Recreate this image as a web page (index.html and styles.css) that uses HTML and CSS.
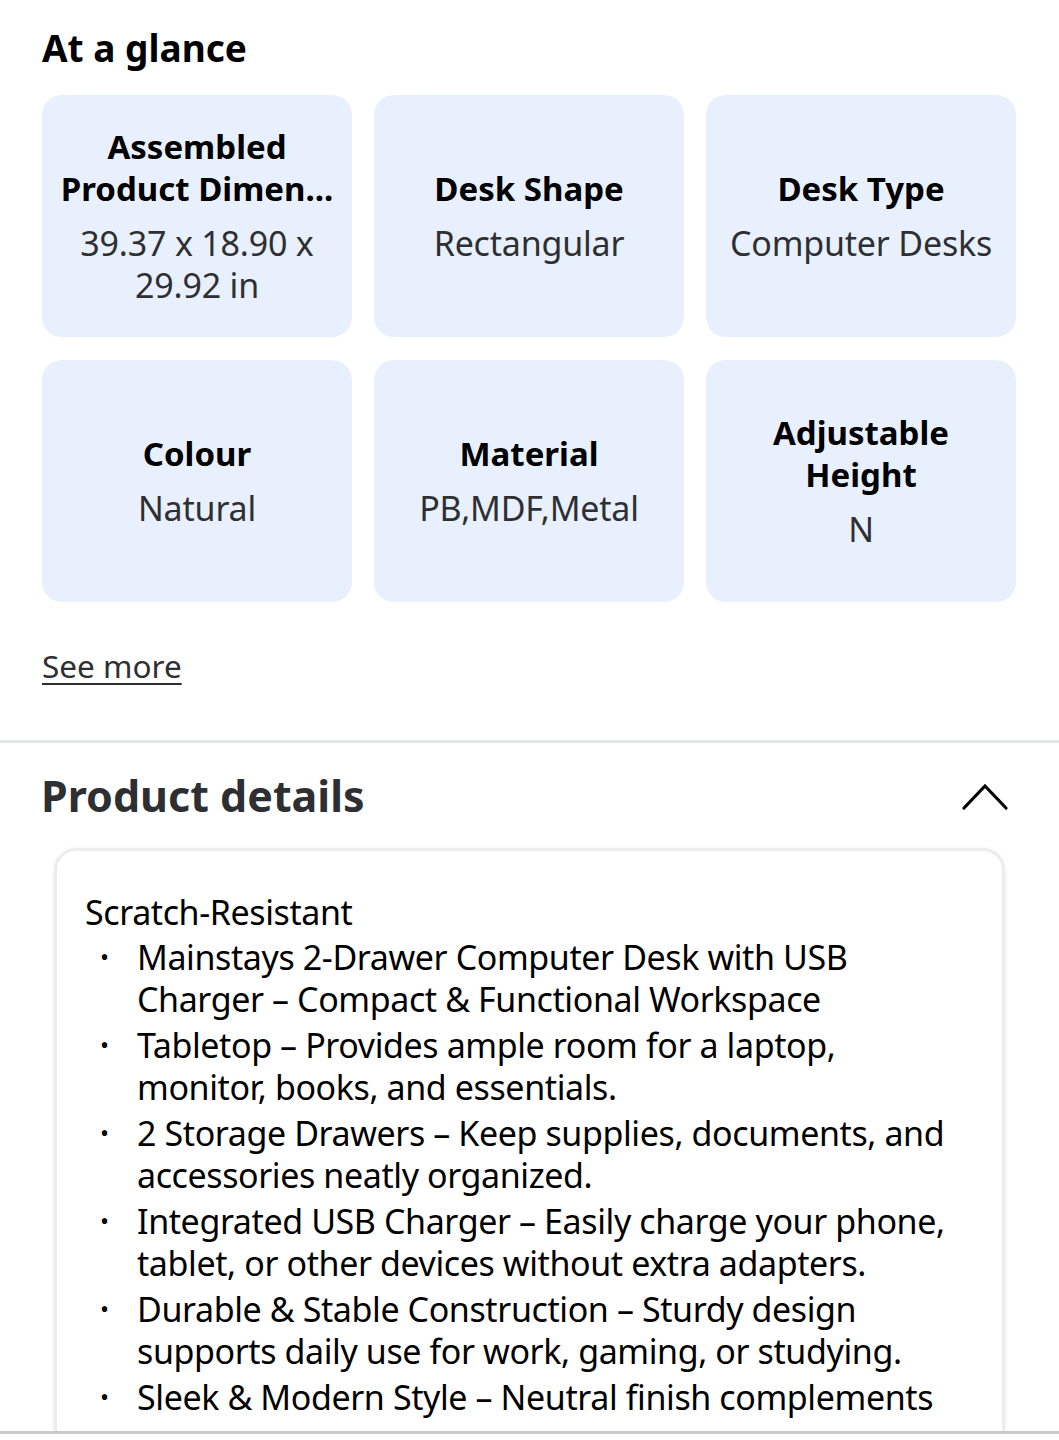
FILE: index.html
```html
<!DOCTYPE html>
<html lang="en">
<head>
<meta charset="utf-8">
<title>Desk – At a glance</title>
<link rel="stylesheet" href="styles.css">
</head>
<body>
<section class="glance">
  <h2 class="glance-title">At a glance</h2>
  <div class="tile-grid">
    <div class="tile">
      <div class="tile-label">Assembled Product Dimen...</div>
      <div class="tile-value">39.37 x 18.90 x 29.92 in</div>
    </div>
    <div class="tile">
      <div class="tile-label">Desk Shape</div>
      <div class="tile-value">Rectangular</div>
    </div>
    <div class="tile">
      <div class="tile-label">Desk Type</div>
      <div class="tile-value">Computer Desks</div>
    </div>
    <div class="tile">
      <div class="tile-label">Colour</div>
      <div class="tile-value">Natural</div>
    </div>
    <div class="tile">
      <div class="tile-label">Material</div>
      <div class="tile-value">PB,MDF,Metal</div>
    </div>
    <div class="tile">
      <div class="tile-label narrow">Adjustable Height</div>
      <div class="tile-value">N</div>
    </div>
  </div>
  <a class="see-more" href="#">See more</a>
</section>

<section class="details">
  <div class="details-head">
    <h2 class="details-title">Product details</h2>
    <svg class="chevron" width="48" height="30" viewBox="0 0 48 30" aria-hidden="true">
      <path d="M3 27 L24 5 L45 27" fill="none" stroke="#000" stroke-width="3.2" stroke-linecap="round" stroke-linejoin="miter"/>
    </svg>
  </div>
  <div class="details-card">
    <p class="details-intro">Scratch-Resistant</p>
    <ul class="details-list">
      <li>Mainstays 2-Drawer Computer Desk with USB Charger – Compact &amp; Functional Workspace</li>
      <li>Tabletop – Provides ample room for a laptop, monitor, books, and essentials.</li>
      <li>2 Storage Drawers – Keep supplies, documents, and accessories neatly organized.</li>
      <li>Integrated USB Charger – Easily charge your phone, tablet, or other devices without extra adapters.</li>
      <li>Durable &amp; Stable Construction – Sturdy design supports daily use for work, gaming, or studying.</li>
      <li>Sleek &amp; Modern Style – Neutral finish complements</li>
    </ul>
  </div>
</section>

<div class="bottom-edge"></div>
</body>
</html>
```

FILE: styles.css
```css
html, body {
  margin: 0;
  padding: 0;
  background: #fff;
}

body {
  font-family: "Noto Sans", "Open Sans", sans-serif;
  color: #1a1a1a;
  overflow: hidden;
  height: 1440px;
}

/* At a glance */
.glance {
  padding: 22px 42px 0 42px;
}

.glance-title {
  margin: 0;
  font-size: 37px;
  font-weight: 700;
  line-height: 52px;
  color: #000;
}

.tile-grid {
  display: grid;
  grid-template-columns: repeat(3, 310px);
  grid-auto-rows: 242px;
  column-gap: 22px;
  row-gap: 23px;
  margin-top: 21px;
}

.tile {
  background: #e9f0fd;
  border-radius: 20px;
  display: flex;
  flex-direction: column;
  align-items: center;
  justify-content: center;
  text-align: center;
  padding: 0 10px;
}

.tile-label {
  font-size: 33px;
  font-weight: 700;
  line-height: 42px;
  color: #000;
  max-width: 290px;
}

.tile-label.narrow {
  max-width: 250px;
}

.tile-value {
  font-size: 34px;
  font-weight: 400;
  line-height: 42px;
  color: #2e2f32;
  margin-top: 12px;
  max-width: 280px;
  letter-spacing: -0.2px;
}

.see-more {
  display: inline-block;
  margin-top: 44px;
  font-size: 31.5px;
  line-height: 40px;
  color: #2e2f32;
  text-decoration: underline;
  text-underline-offset: 5px;
  text-decoration-thickness: 2px;
}

/* Product details */
.details {
  margin-top: 54px;
  border-top: 3px solid #e3e4e5;
}

.details-head {
  display: flex;
  align-items: center;
  justify-content: space-between;
  padding: 26px 50px 0 41px;
  height: 54px;
}

.details-title {
  margin: 0;
  font-size: 43px;
  font-weight: 700;
  line-height: 54px;
  color: #2e2f32;
}

.chevron {
  display: block;
}

.details-card {
  margin: 25px 54px 0 54px;
  border: 3px solid #ececec;
  border-radius: 22px;
  box-shadow: 0 1px 4px rgba(0, 0, 0, 0.08);
  padding: 40px 36px 30px 28px;
}

.details-intro {
  margin: 0;
  font-size: 34px;
  line-height: 42px;
  color: #000;
  letter-spacing: -0.4px;
}

.details-list {
  margin: 3px 0 0 0;
  padding: 0;
  list-style: none;
  font-size: 34px;
  line-height: 42px;
  color: #000;
  letter-spacing: -0.4px;
}

.details-list li {
  display: grid;
  grid-template-columns: 52px 1fr;
  margin-bottom: 4px;
}

.details-list li::before {
  content: "•";
  font-size: 24px;
  padding-left: 15px;
}

.bottom-edge {
  position: fixed;
  left: 0;
  right: 0;
  bottom: 0;
  height: 6px;
  background: #fff;
  border-top: 3px solid #c9c9c9;
}
```
